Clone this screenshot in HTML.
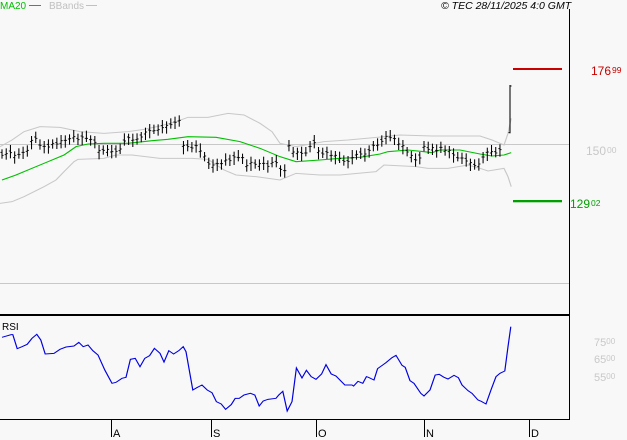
<!DOCTYPE html>
<html><head><meta charset="utf-8"><style>
html,body{margin:0;padding:0;background:#f8f8f8;width:627px;height:440px;overflow:hidden}
svg{display:block}
text{font-family:"Liberation Sans",sans-serif}
</style></head><body>
<svg id="s" width="627" height="440" viewBox="0 0 627 440" xmlns="http://www.w3.org/2000/svg">
<rect width="627" height="440" fill="#f8f8f8"/>
<line x1="0" y1="144.5" x2="569" y2="144.5" stroke="#c8c8c8"/>
<line x1="0" y1="283.5" x2="569" y2="283.5" stroke="#c8c8c8"/>
<line x1="0" y1="315" x2="569" y2="315" stroke="#000" stroke-width="2"/>
<line x1="0" y1="419.5" x2="569" y2="419.5" stroke="#000"/>
<line x1="569.5" y1="9" x2="569.5" y2="420" stroke="#000"/>
<g stroke="#000"><line x1="111.5" y1="420" x2="111.5" y2="437"/><line x1="211.5" y1="420" x2="211.5" y2="437"/><line x1="316.5" y1="420" x2="316.5" y2="437"/><line x1="424.5" y1="420" x2="424.5" y2="437"/><line x1="529.5" y1="420" x2="529.5" y2="437"/></g>
<g font-size="11" fill="#000"><text x="113" y="437">A</text><text x="213" y="437">S</text><text x="318" y="437">O</text><text x="426" y="437">N</text><text x="531" y="437">D</text></g>
<g transform="scale(0.4,0.33333)" fill="none">
<polyline stroke="#c8c8c8" stroke-width="3" points="0,440 30,420 60,395 100,380 150,382 200,395 260,400 320,395 360,388 400,378 440,365 470,352 520,352 570,340 610,345 650,370 680,395 700,430 740,440 810,425 870,420 960,410 1000,405 1080,408 1200,408 1230,420 1260,435 1270,400 1278,355"/>
<polyline stroke="#c8c8c8" stroke-width="3" points="0,610 30,605 60,590 110,560 140,540 160,515 185,485 195,478 260,475 290,465 330,465 400,475 480,475 520,478 560,510 590,525 640,530 700,540 740,520 800,525 850,525 940,515 960,495 1040,500 1070,505 1120,505 1170,495 1200,505 1220,513 1260,505 1270,530 1278,560"/>
<polyline stroke="#00c000" stroke-width="3.2" points="5,540 40,525 80,505 120,485 160,465 190,440 220,432 260,430 320,430 380,422 420,418 470,410 540,412 600,425 650,445 700,470 740,485 800,480 850,475 900,472 950,462 970,455 1020,450 1060,455 1080,458 1100,450 1150,450 1200,462 1230,468 1260,465 1278,458"/>
<g id="bars" stroke="#000" stroke-width="2.6"></g>
</g>
<g transform="translate(0,220) scale(0.4,0.33333)" fill="none">
<polyline stroke="#0000e0" stroke-width="3" points="5,352 28,344 32,344 43,386 55,380 68,373 80,355 92,343 102,360 113,402 135,400 150,388 165,381 185,378 197,367 208,380 220,375 232,392 245,405 262,450 280,490 290,487 305,475 315,472 326,418 338,415 350,440 362,415 374,407 386,385 400,400 410,426 422,392 434,402 447,392 458,380 465,395 482,510 492,503 505,495 518,510 530,518 541,545 553,552 564,568 578,554 588,535 598,535 610,525 626,520 637,525 648,558 658,543 670,538 690,535 697,525 707,514 718,573 730,545 741,444 755,474 766,451 778,470 790,478 804,462 815,434 828,462 840,468 862,495 880,495 884,498 895,484 907,490 916,470 921,472 935,480 944,446 965,428 980,413 990,406 1005,436 1013,442 1025,482 1035,490 1052,520 1060,528 1075,510 1088,465 1098,463 1110,472 1120,477 1135,466 1146,473 1155,495 1170,512 1180,520 1195,540 1203,544 1215,552 1228,508 1240,470 1250,460 1262,453 1270,380 1277,320"/>
</g>
<g transform="translate(513,68)"><rect x="0" y="0" width="49" height="2" fill="#c80000"/></g>
<rect x="513" y="200" width="49" height="2.3" fill="#00a000"/>
<text x="591" y="75" font-size="12" fill="#c80000">176<tspan font-size="8.5" dx="1" dy="-2">99</tspan></text>
<text x="586" y="155" font-size="12" fill="#c8c8c8">150<tspan font-size="8.5" dx="1" dy="-2">00</tspan></text>
<text x="570" y="208" font-size="12" fill="#00a000">129<tspan font-size="8.5" dx="1" dy="-2">02</tspan></text>
<g font-size="11" fill="#c8c8c8"><text x="594" y="346">75<tspan font-size="8" dy="-2">00</tspan></text><text x="594" y="363">65<tspan font-size="8" dy="-2">00</tspan></text><text x="594" y="381">55<tspan font-size="8" dy="-2">00</tspan></text></g>
<text x="2" y="330" font-size="10" fill="#000">RSI</text>
<text x="0" y="9" font-size="10" fill="#00c000">MA20</text>
<line x1="29" y1="5.5" x2="41" y2="5.5" stroke="#00c000" stroke-width="1"/>
<text x="49" y="9" font-size="10" fill="#c0c0c0">BBands</text>
<line x1="86" y1="5.5" x2="97" y2="5.5" stroke="#c0c0c0"/>
<text x="441" y="9" font-size="10.5" font-style="italic" fill="#000">© TEC 28/11/2025 4:0 GMT</text>
</svg>
<script>
var m=[462,462,455,468,462,460,450,425,415,432,440,438,432,430,425,420,420,410,415,412,412,420,425,455,450,452,455,450,448,420,415,418,420,410,400,392,388,390,380,378,372,370,360,440,440,440,438,450,470,490,498,490,495,480,478,472,470,475,495,490,492,495,490,495,488,485,510,510,440,455,460,460,455,440,425,455,460,460,465,470,475,480,485,470,465,460,465,450,440,435,420,410,410,418,430,440,455,470,480,470,440,445,445,450,445,450,455,465,470,475,480,490,495,495,470,460,455,455,450];
var g=document.getElementById('bars'),h='';
for(var i=0;i<m.length;i++){var x=5+i*10.55,y=m[i],a=y-14-(i%3)*3,b=y+14+(i%4)*3,o=y+((i*7)%11)-5,c=y-((i*5)%9)+4;
h+='<line x1="'+x+'" y1="'+a+'" x2="'+x+'" y2="'+b+'"/><line x1="'+(x-4)+'" y1="'+o+'" x2="'+x+'" y2="'+o+'"/><line x1="'+x+'" y1="'+c+'" x2="'+(x+4)+'" y2="'+c+'"/>';}
h+='<line x1="1275" y1="255" x2="1275" y2="400"/><line x1="1271" y1="398" x2="1275" y2="398"/><line x1="1275" y1="258" x2="1279" y2="258"/>';
g.innerHTML=h;
</script>
</body></html>
